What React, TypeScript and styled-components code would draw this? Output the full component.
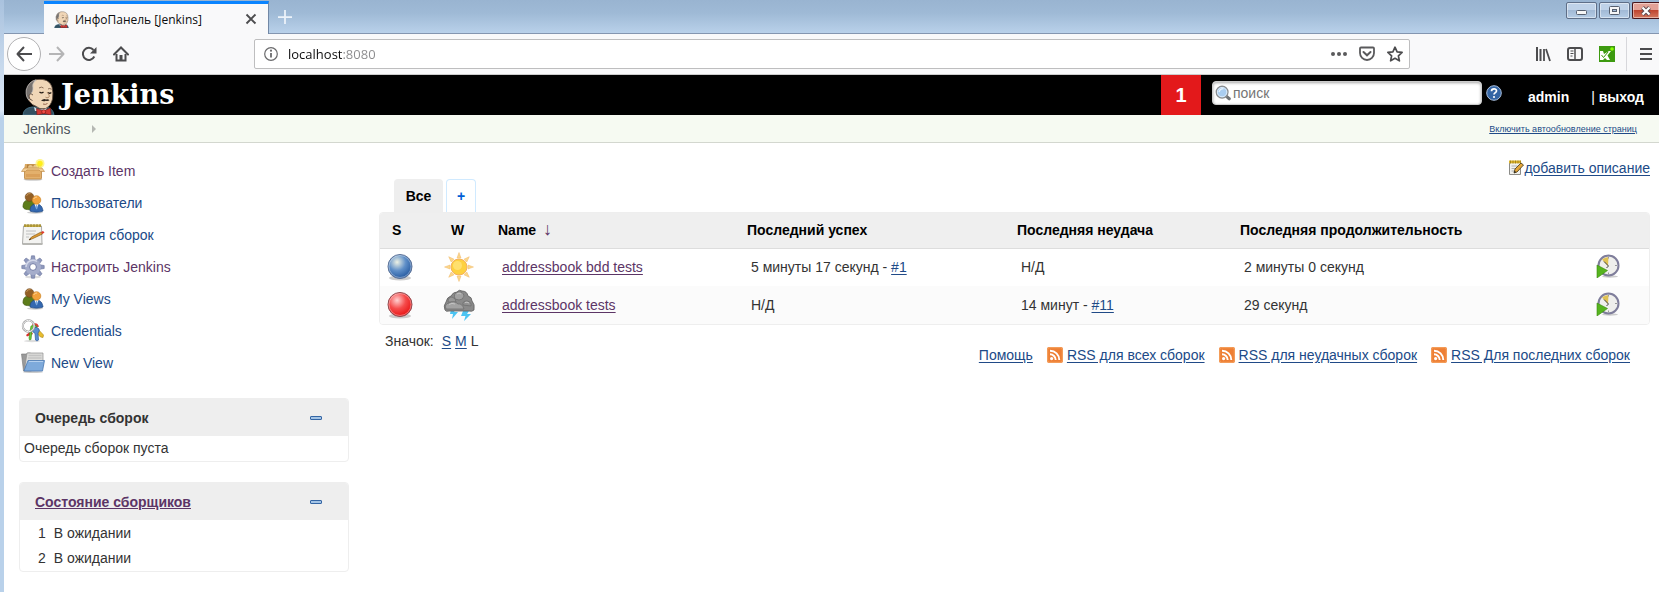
import React from "react";
import styled, { createGlobalStyle } from "styled-components";

const UI = `"Open Sans", "Noto Sans", sans-serif`;
const PAGE = `"Liberation Sans", Arial, sans-serif`;
const LINK = "#204a87";
const VISITED = "#5c3566";

const GlobalStyle = createGlobalStyle`
  * { box-sizing: border-box; }
  body { margin: 0; background: #fff; font-family: ${PAGE}; font-size: 14px; color: #333; }
  button { font: inherit; border: 0; padding: 0; background: none; cursor: pointer; }
  svg { display: block; flex: none; }
  h2 { margin: 0; font-size: 14px; }
`;

const Window = styled.div`
  min-height: 100vh;
  padding-left: 4px;
  background: linear-gradient(#a9c2de, #dce8f6 110px, #b9d1ea 118px);
`;

const Content = styled.div`
  min-height: 100vh;
  background: #fff;
`;

/* Browser chrome */

const TitleBar = styled.div`
  display: flex;
  align-items: flex-start;
  height: 34px;
  padding-left: 40px;
  background: linear-gradient(#99b4d1, #9fbad6 40%, #b9d1ea);
  border-bottom: 1px solid #8496b0;
`;

const BrowserTab = styled.div`
  display: flex;
  align-items: center;
  width: 225px;
  height: 33px;
  margin: 1px 0 -1px;
  padding: 0 11px 0 10px;
  background: #f9f9fa;
  border-top: 3px solid #0a84ff;
  border-right: 1px solid #7288a6;
  font-family: ${UI};
  font-size: 12px;
  color: #0c0c0d;
`;

const TabTitle = styled.span`
  flex: 1;
  margin-left: 6px;
  white-space: nowrap;
`;

const NewTab = styled.button`
  display: grid;
  place-items: center;
  width: 32px;
  height: 33px;
`;

const WindowButtons = styled.div`
  display: flex;
  gap: 2px;
  margin-left: auto;
  padding-top: 2px;
`;

const WindowButton = styled.button<{ $close?: boolean }>`
  display: grid;
  place-items: center;
  width: ${(p) => (p.$close ? 27 : 31)}px;
  height: 17px;
  border: 1px solid ${(p) => (p.$close ? "#47161c" : "#5f6f88")};
  border-right-width: ${(p) => (p.$close ? 0 : 1)}px;
  border-radius: ${(p) => (p.$close ? "2px 0 0 2px" : "2px")};
  box-shadow: inset 0 0 0 1px rgba(255, 255, 255, 0.45);
  background: ${(p) =>
    p.$close
      ? "linear-gradient(#e3a196 0 45%, #bf4530 50%, #d4785f)"
      : "linear-gradient(#bfd2e8 0 45%, #a2bad6 50%, #b6cde6)"};
`;

const Toolbar = styled.div`
  display: flex;
  align-items: center;
  height: 41px;
  padding: 0 1px 0 3px;
  background: #f9f9fa;
  border-bottom: 1px solid #ccc;
`;

const ToolButton = styled.button`
  display: grid;
  place-items: center;
  width: 32px;
  height: 32px;
`;

const BackButton = styled(ToolButton)`
  width: 34px;
  height: 34px;
  border: 1px solid #b1b1b3;
  border-radius: 50%;
  background: #fff;
`;

const MenuButton = styled(ToolButton)`
  width: 24px;
  margin-left: 7px;
`;

const Divider = styled.span`
  width: 1px;
  height: 34px;
  margin-left: 3px;
  background: #d7d7db;
`;

const UrlBar = styled.div`
  display: flex;
  flex: 1;
  align-items: center;
  height: 30px;
  margin: 0 117px;
  padding: 0 0 0 9px;
  background: #fff;
  border: 1px solid #bebebf;
  border-radius: 2px;
`;

const UrlInput = styled.input`
  flex: 1;
  min-width: 0;
  margin-left: 10px;
  padding: 0;
  border: 0;
  outline: 0;
  font-family: ${UI};
  font-size: 13px;
  line-height: 20px;
  color: #0c0c0d;
  background: linear-gradient(90deg, #0c0c0d 54px, #8a8a8c 54px);
  -webkit-background-clip: text;
  background-clip: text;
  -webkit-text-fill-color: transparent;
`;

const UrlAction = styled(ToolButton)`
  width: 28px;
`;

/* Jenkins header */

const Header = styled.header`
  display: flex;
  align-items: center;
  height: 40px;
  padding: 0 15px 0 18px;
  background: #000;
  color: #fff;
`;

const Logo = styled.a`
  display: flex;
  align-items: flex-end;
  gap: 6px;
  height: 40px;
  margin-right: auto;
  color: #fff;
  text-decoration: none;
`;

const LogoText = styled.span`
  align-self: center;
  font: bold 27px/32px "DejaVu Serif", serif;
`;

const Alerts = styled.button`
  width: 40px;
  height: 40px;
  background: #e3191b;
  color: #fff;
  font-size: 20px;
  font-weight: bold;
`;

const SearchForm = styled.form`
  display: flex;
  align-items: center;
  gap: 4px;
  margin-left: 11px;
  padding-bottom: 4px;
`;

const SearchBox = styled.label`
  display: flex;
  align-items: center;
  gap: 2px;
  width: 270px;
  height: 24px;
  padding-left: 2px;
  background: #fff;
  border: 1px solid #ccc;
  border-radius: 4px;
  box-shadow: inset 0 1px 3px rgba(0, 0, 0, 0.35);
`;

const SearchInput = styled.input`
  flex: 1;
  min-width: 0;
  padding: 0;
  border: 0;
  outline: 0;
  background: none;
  font: 14px/18px ${PAGE};
  &::placeholder { color: #757575; opacity: 1; }
`;

const Account = styled.div`
  display: flex;
  margin-left: 26px;
  padding-top: 4px;
  line-height: 18px;
`;

const AccountLink = styled.a`
  color: #fff;
  font-weight: bold;
  text-decoration: none;
`;

const LogOut = styled.span`
  margin-left: 22px;
`;

const Breadcrumbs = styled.nav`
  display: flex;
  align-items: center;
  height: 28px;
  padding: 0 22px 0 19px;
  background: #f6faf2;
  border-bottom: 1px solid #d3d7cf;
`;

const Crumb = styled.a`
  margin-right: 22px;
  color: #4d545d;
  text-decoration: none;
`;

const AutoRefresh = styled.a`
  margin-left: auto;
  font-size: 9px;
  color: ${LINK};
`;

/* Page body */

const Body = styled.div`
  display: flex;
  gap: 30px;
  padding: 0 9px 20px 15px;
`;

const Side = styled.aside`
  flex: none;
  width: 330px;
  padding-top: 12px;
`;

const Main = styled.main`
  flex: 1;
  min-width: 0;
  padding-top: 16px;
`;

const Task = styled.a<{ $visited?: boolean }>`
  display: flex;
  align-items: center;
  gap: 6px;
  height: 32px;
  padding-left: 2px;
  color: ${(p) => (p.$visited ? VISITED : LINK)};
  text-decoration: none;
`;

const Panes = styled.div`
  display: flex;
  flex-direction: column;
  gap: 20px;
  padding-top: 19px;
`;

const Pane = styled.section`
  border: 1px solid #eee;
  border-radius: 4px;
  overflow: hidden;
`;

const PaneHeader = styled.div`
  display: flex;
  align-items: center;
  justify-content: space-between;
  height: 37px;
  padding: 0 26px 0 15px;
  background: #eee;
`;

const PaneLink = styled.a`
  color: ${VISITED};
`;

const PaneText = styled.p`
  margin: 0;
  padding-left: 4px;
  line-height: 25px;
`;

const Executors = styled.ol`
  margin: 0;
  padding: 1px 0 0 18px;
  list-style: none;
  line-height: 25px;
`;

const Executor = styled.li`
  display: flex;
  gap: 8px;
`;

const Description = styled.div`
  display: flex;
  justify-content: flex-end;
  margin-bottom: 2px;
  line-height: 18px;
`;

const Link = styled.a<{ $visited?: boolean }>`
  color: ${(p) => (p.$visited ? VISITED : LINK)};
  text-decoration: underline;
  text-underline-offset: 2px;
`;

const DescriptionLink = styled(Link)`
  display: flex;
  align-items: center;
`;

const Tabs = styled.div`
  display: flex;
  gap: 3px;
  padding-left: 15px;
`;

const ViewTab = styled.a<{ $active?: boolean }>`
  display: grid;
  place-items: center;
  width: ${(p) => (p.$active ? 49 : 30)}px;
  height: 33px;
  border: 1px solid ${(p) => (p.$active ? "#eee" : "#d0eaff")};
  border-bottom: 0;
  border-radius: 4px 4px 0 0;
  background: ${(p) => (p.$active ? "#eee" : "#fff")};
  color: ${(p) => (p.$active ? "#000" : "#005fd6")};
  font-weight: bold;
  text-decoration: none;
`;

const TableFrame = styled.div`
  border: 1px solid #eee;
  border-radius: 4px;
  overflow: hidden;
`;

const Jobs = styled.table`
  width: 100%;
  table-layout: fixed;
  border-collapse: collapse;
`;

const Col = styled.col<{ $w?: number }>`
  width: ${(p) => (p.$w ? `${p.$w}px` : "auto")};
`;

const Th = styled.th`
  height: 35px;
  padding: 0 0 0 12px;
  background: #efefef;
  border-bottom: 1px solid #ddd;
  color: #000;
  text-align: left;
  white-space: nowrap;
`;

const Arrow = styled.span`
  margin-left: 3px;
  font-size: 18px;
  line-height: 14px;
  font-weight: normal;
  color: ${VISITED};
`;

const Row = styled.tr`
  background: #fff;
  &:nth-child(2n) { background: #fbfbfb; }
`;

const Td = styled.td<{ $icon?: boolean }>`
  height: 38px;
  padding: 0 0 0 ${(p) => (p.$icon ? 4 : 16)}px;
`;

const Footer = styled.div`
  display: flex;
  justify-content: space-between;
  padding: 7px 20px 0 6px;
  line-height: 18px;
`;

const IconSizes = styled.div`
  display: flex;
  gap: 4px;
`;

const SizeLabel = styled.span`
  margin-right: 4px;
`;

const Feeds = styled.div`
  display: flex;
  gap: 14px;
  padding-top: 14px;
`;

const Feed = styled.span`
  display: flex;
  align-items: center;
  gap: 4px;
`;

/* Drawings */

const Butler = ({ w, h }: { w: number; h: number }) => (
  <svg width={w} height={h} viewBox="0 0 33 37">
    <path d="M1 37q.5-7 9-8h14q7 1 8 8z" fill="#335061" stroke="#4c7a90" strokeWidth=".8" />
    <path d="M12 29q7 5 13 0l-1 4H13z" fill="#d9e2e8" />
    <path d="M8 24Q4 20 4.500 13 6 3 15 1.500 27 0 30 9q1.500 6 .5 12-1.500 7-7 9.500-6 1.500-10-2.500-3.500-1-5.500-4z" fill="#f0d6b7" stroke="#5a473b" strokeWidth=".8" />
    <path d="M8.500 16.500L7 22Q3.500 19 4.200 12 6 4 14 1.800 9.500 6 11 10q.5 3-2.500 6.500z" fill="#77726f" stroke="#c9c6c4" strokeWidth=".7" />
    <path d="M11 17q-3.500-2.500-4 1 0 4 3.500 4.500" fill="#f0d6b7" stroke="#5a473b" strokeWidth=".9" />
    <path d="M17 10q2.500-1.800 4.500 0M26 11q1.800-1.200 3.500.300" fill="none" stroke="#8a6d57" />
    <path d="M17.500 14q2 1.800 4 0M26 14.500q1.600 1.500 3.300 0" fill="none" stroke="#221a15" strokeWidth="1.200" />
    <path d="M25 14q3.500 4 1.500 5.500-1.700.8-3-.3" fill="none" stroke="#a67e5c" strokeWidth=".9" />
    <path d="M19 22.500q3-2.500 5-1 2.500-.8 3.500 1-2 .8-3.700.2-2.300 1.200-4.800-.2z" fill="#2e2520" />
    <path d="M21 26q2.500 1 4.500-.5" fill="none" stroke="#8c5a45" strokeWidth=".9" />
    <path d="M14.500 30.500l7 2.500 7-3 .5 7-7-1.500-7 1.500z" fill="#d33833" stroke="#7c1a16" strokeWidth=".6" />
    <circle cx="21.700" cy="33.700" r="2" fill="#f04b45" stroke="#7c1a16" strokeWidth=".7" />
  </svg>
);

const Info = () => (
  <svg width="14" height="14" viewBox="0 0 14 14">
    <circle cx="7" cy="7" r="6.300" fill="none" stroke="#6a6a6c" strokeWidth="1.200" />
    <path d="M7 6v4.500" stroke="#6a6a6c" strokeWidth="1.800" />
    <circle cx="7" cy="3.700" r="1.100" fill="#6a6a6c" />
  </svg>
);

const Stroke = ({ d, color = "#4c4c4e", w = 2, size = 16 }: { d: string; color?: string; w?: number; size?: number }) => (
  <svg width={size} height={size} viewBox="0 0 16 16" fill="none" stroke={color} strokeWidth={w} strokeLinejoin="round">
    <path d={d} />
  </svg>
);

const Reload = () => (
  <svg width="16" height="16" viewBox="0 0 16 16">
    <path d="M13.300 10.500A6 6 0 1 1 12.500 4" fill="none" stroke="#4c4c4e" strokeWidth="2" />
    <path d="M15.500 1v6.500H9z" fill="#4c4c4e" />
  </svg>
);

const Home = () => (
  <svg width="16" height="16" viewBox="0 0 16 16">
    <path d="M1 8.500L8 1.500l7 7" fill="none" stroke="#4c4c4e" strokeWidth="2" strokeLinecap="round" />
    <path d="M3.500 8v6.500h9V8" fill="none" stroke="#4c4c4e" strokeWidth="2" />
    <path d="M6.500 9h3v5.500h-3z" fill="#4c4c4e" />
  </svg>
);

const Dots = () => (
  <svg width="16" height="4" viewBox="0 0 16 4" fill="#5a5a5c">
    <circle cx="2" cy="2" r="2" /><circle cx="8" cy="2" r="2" /><circle cx="14" cy="2" r="2" />
  </svg>
);

const Pocket = () => (
  <svg width="16" height="16" viewBox="0 0 16 16" fill="none" stroke="#5a5a5c" strokeWidth="1.800">
    <path d="M1 2.500q0-1 1-1h12q1 0 1 1V7a7 7 0 0 1-14 0z" />
    <path d="M4.500 6L8 9.300 11.500 6" strokeWidth="2" strokeLinecap="round" />
  </svg>
);

const Library = () => (
  <svg width="16" height="16" viewBox="0 0 16 16" stroke="#4c4c4e" strokeWidth="2">
    <path d="M2 1v14M5.500 3v12" /><path d="M9 3v12M11 3l4 12" strokeWidth="1.800" />
  </svg>
);

const Sidebar = () => (
  <svg width="16" height="16" viewBox="0 0 16 16" fill="none" stroke="#4c4c4e">
    <rect x="1" y="2" width="14" height="12" rx="2" strokeWidth="2" />
    <path d="M8 2v12" strokeWidth="1.500" /><path d="M3.500 5h3M3.500 7.500h3M3.500 10h2" />
  </svg>
);

const Katalon = () => (
  <svg width="16" height="16" viewBox="0 0 16 16">
    <path fill="#3d9a10" d="M0 0h16v16H0z" />
    <path d="M1 5h3l1 3 5-3h2L8.500 9.500 11 14H8l-2-2-2 2H1z" fill="#fff" />
    <path d="M2.500 9l2 2.500L9 6" stroke="#3d9a10" fill="none" />
    <circle cx="13" cy="3" r="1.800" fill="#8f0" />
  </svg>
);

const Magnifier = () => (
  <svg width="16" height="16" viewBox="0 0 18 18">
    <path d="M12 12l4 3.500" stroke="#6f7376" strokeWidth="3.500" strokeLinecap="round" />
    <circle cx="8" cy="8" r="6.600" fill="#a9cdf0" stroke="#8a8d90" strokeWidth="1.500" />
    <circle cx="8" cy="8" r="5.300" fill="none" stroke="#dfeefa" strokeWidth="1" />
    <path d="M4.500 8q1-4 5-4" stroke="#e8f3fd" strokeWidth="1.500" fill="none" />
  </svg>
);

const Help = () => (
  <svg width="16" height="16" viewBox="0 0 16 16">
    <circle cx="8" cy="8" r="7.300" fill="#3465a4" stroke="#a9bedb" strokeWidth="1" />
    <path d="M5.500 6.300C5.500 3 10.700 3.200 10.500 6 10.400 7.700 8 7.600 8 9.600" fill="none" stroke="#fff" strokeWidth="1.700" />
    <circle cx="8" cy="12" r="1.100" fill="#fff" />
  </svg>
);

const Package = () => (
  <svg width="24" height="24" viewBox="0 0 24 24">
    <ellipse cx="12" cy="20.500" rx="9.500" ry="1.300" fill="#ccc" />
    <path d="M4 5h16l1 6H3z" fill="#d9a862" /><path d="M6 5.500h12v4H6z" fill="#b5813f" />
    <path d="M7 9q0-3 2.500-3T12 9zM12 9q0-3.500 2.500-3.500T17 9z" fill="#e6c48c" />
    <path d="M3.500 10h17v9q0 1-1 1h-15q-1 0-1-1z" fill="#e3b06c" stroke="#b98440" strokeWidth=".8" />
    <path d="M3 9h18l2.500 3.500h-4L18 11H6l-1.500 1.500h-4z" fill="#f3cd93" stroke="#b98440" strokeWidth=".6" />
    <path d="M5 15h14v3H5z" fill="#cf8f45" opacity=".45" />
    <circle cx="19" cy="4.500" r="4.500" fill="#fff36a" opacity=".75" /><circle cx="19" cy="4.500" r="2.700" fill="#ffee1c" />
  </svg>
);

const People = () => (
  <svg width="24" height="24" viewBox="0 0 24 24">
    <ellipse cx="14" cy="21.500" rx="8" ry="1.200" fill="#ccc" />
    <path d="M2 16c0-5 2-7 6-7s7 3 7 9c-4 1-10 1-12-.500z" fill="#5d7c1a" stroke="#41570d" strokeWidth=".7" />
    <circle cx="8.500" cy="6" r="4.300" fill="#936026" stroke="#6e4415" strokeWidth=".6" />
    <path d="M5.500 5q1-3 4-2.500" stroke="#c29155" fill="none" />
    <path d="M9 20c0-5 2.500-7 6.500-7s6 3 6.500 7c-3 1.500-10 1.500-13 0z" fill="#3468b0" stroke="#20477f" strokeWidth=".7" />
    <path d="M13.500 13h4l-2 5z" fill="#fff" /><path d="M15 14h1l.600 3-1 1.500-1-1.500z" fill="#79a7dd" />
    <circle cx="15.500" cy="9" r="4.300" fill="#f2a23c" stroke="#c67814" strokeWidth=".6" />
    <path d="M12.700 8q1-2.500 3.500-2" stroke="#ffd596" fill="none" />
  </svg>
);

const Notepad = () => (
  <svg width="24" height="24" viewBox="0 0 24 24">
    <path d="M2.500 3h18l.5 18H1.500z" fill="#f3f3f1" stroke="#a3a3a0" strokeWidth=".9" />
    <path d="M1.500 20h20v2h-20z" fill="#b7b7b3" />
    <path d="M3 1.500h17v2.500H3z" fill="#c5ad45" /><path d="M4 1v3M7 1v3M10 1v3M13 1v3M16 1v3M19 1v3" stroke="#857226" strokeWidth=".8" />
    <path d="M5 8h10M5 11h9M5 14h3" stroke="#c0c0c0" />
    <path d="M8 17l2.500-3L20 9l1.500 2L12 15.500z" fill="#dd9a33" stroke="#7c5013" strokeWidth=".6" />
    <path d="M20 9l2-1 1.500 1.500-2 1.500z" fill="#e03a2d" /><path d="M8 17l1.200-1.700.8 1z" fill="#222" />
  </svg>
);

const EditNote = () => (
  <svg width="16" height="16" viewBox="0 0 16 16">
    <path d="M1.500 2h11v12.500h-11z" fill="#f1f1ee" stroke="#8c8c88" />
    <path d="M1 .5h12v2.800H1z" fill="#dfb52c" /><path d="M2.500.5v3M5 .5v3M7.500.5v3M10 .5v3M12.300.5v3" stroke="#8a6d12" strokeWidth=".7" />
    <path d="M3.500 6h6M3.500 8.500h4M3.500 11h3" stroke="#b0b0b0" />
    <path d="M6 13l1-4 6-6 2.500 2-6.500 7z" fill="#e5a63a" stroke="#55461f" strokeWidth=".9" />
    <path d="M6 13l.6-2.200 1.500 1.200z" fill="#222" />
  </svg>
);

const Gear = () => (
  <svg width="24" height="24" viewBox="0 0 24 24">
    <ellipse cx="12" cy="22" rx="8" ry="1.300" fill="#ddd" />
    <g fill="#8f99bd" stroke="#68729c" strokeWidth=".6">
      {[0, 45, 90, 135, 180, 225, 270, 315].map((a) => (
        <path key={a} d="M9.700 6L10.500 .8h3L14.300 6z" transform={`rotate(${a} 12 12)`} />
      ))}
    </g>
    <circle cx="12" cy="12" r="8" fill="#a5adcb" />
    <path d="M5 12a7 7 0 0 1 11-5.500" stroke="#d1d6e8" strokeWidth="1.500" fill="none" />
    <circle cx="12" cy="12" r="3.400" fill="#fff" stroke="#707aa5" />
  </svg>
);

const Keys = () => (
  <svg width="24" height="24" viewBox="0 0 24 24">
    <ellipse cx="11" cy="22" rx="8" ry="1.200" fill="#ddd" />
    <path d="M15 8l7.500 8-.5 2.500-2.500-.5-6-6z" fill="#e8bd2e" stroke="#a98412" strokeWidth=".6" />
    <path d="M11 5.500q5-3.500 7 2l-4 2z" fill="#d9413a" /><path d="M10 12l-5 4 1 1.500 6-2.500z" fill="#d9302b" />
    <path d="M10 7q5-2 6 1l-5 4-1 8.500L8.500 21 8 19l1-7z" fill="#6cc93a" stroke="#3c8c17" strokeWidth=".6" />
    <path d="M12 9q4-2 6 1 1 2-1 4l.5 7-1.500 1-1.500-1-.5-6.500q-4-2-2-5.500z" fill="#5a8fd0" stroke="#2c5c9c" strokeWidth=".7" />
    <circle cx="7.500" cy="7" r="5.700" fill="none" stroke="#999" strokeWidth="2" />
    <circle cx="7.500" cy="7" r="5.700" fill="none" stroke="#f2f2f2" strokeWidth="1" />
  </svg>
);

const Folder = () => (
  <svg width="24" height="24" viewBox="0 0 24 24">
    <ellipse cx="12" cy="21" rx="10" ry="1" fill="#ccc" />
    <path d="M.5 3h5l1-1h3l1 18H2.500z" fill="#9a9a9a" stroke="#777" strokeWidth=".6" />
    <path d="M6 2h16v13H4z" fill="#dcdcda" stroke="#8e8e8c" strokeWidth=".7" />
    <path d="M7.500 4.500h13M7 7h13.500" stroke="#c3c3c3" strokeWidth="1.500" />
    <path d="M7 9.500h16.500L21.500 20H3z" fill="#7eaadb" stroke="#4b7ab3" strokeWidth=".8" />
    <path d="M8 10.500h14" stroke="#b5d0ee" />
  </svg>
);

const Ball = ({ id, light, base, dark, rim }: { id: string; light: string; base: string; dark: string; rim: string }) => (
  <svg width="32" height="32" viewBox="0 0 32 32">
    <defs>
      <radialGradient id={id} cx=".38" cy=".32" r=".65">
        <stop offset="0" stopColor={light} /><stop offset=".55" stopColor={base} /><stop offset="1" stopColor={dark} />
      </radialGradient>
    </defs>
    <ellipse cx="16" cy="27" rx="11" ry="2.500" fill="#ccc" />
    <circle cx="16" cy="15.500" r="12" fill={`url(#${id})`} stroke={rim} />
    <circle cx="16" cy="15.500" r="11" fill="none" stroke="#fff" opacity=".35" />
  </svg>
);

const BlueBall = () => <Ball id="ballBlue" light="#eef2e4" base="#5f8fc8" dark="#2c60a5" rim="#5c7196" />;
const RedBall = () => <Ball id="ballRed" light="#ffd0d0" base="#f54b4b" dark="#ea1c1c" rim="#8c4a50" />;

const Sun = () => (
  <svg width="32" height="32" viewBox="0 0 32 32">
    <g fill="#fbd78c" stroke="#f0b96a" strokeWidth=".5">
      {[0, 45, 90, 135, 180, 225, 270, 315].map((a) => (
        <path key={a} d="M14 7L16 1.500 18 7z" transform={`rotate(${a} 16 16)`} />
      ))}
    </g>
    <circle cx="16" cy="16" r="8" fill="#fdd13f" stroke="#f5b05a" />
    <circle cx="14.500" cy="14.500" r="4.500" fill="#ffe37a" opacity=".8" />
  </svg>
);

const Storm = () => (
  <svg width="32" height="32" viewBox="0 0 32 32">
    <path d="M8 20h5l-2 3h4l-6 7 1-5H7zM20 22h6l-2 3h4l-7 7 1.500-5H18z" fill="#4cc4f2" />
    <path d="M2 21q-2-4 1-8 1-5 5-6 2-4 6-4 2-3 5-1 5 0 6 5 4 1 4 5 3 3 2 9-2 2-5 1H6q-3 1-4-1z" fill="#8a8a8a" stroke="#606060" strokeWidth=".8" />
    <g fill="#a2a2a2" stroke="#6a6a6a" strokeWidth=".7">
      <path d="M12 10q-2-6 3-7 5-1 6 4-1 4-5 4z" />
      <path d="M5 13q0-5 4-5 4 1 4 5z" fill="#989898" />
      <path d="M3 20q-2-5 3-6 5-3 9 1 4-1 6 5z" />
      <path d="M20 16q-1-4 4-4 5 1 4 5z" fill="#929292" />
    </g>
    <path d="M14 5q2-2 4 0M6 15.500q3-2 6-.5M22 13.500q2-1 4 .5" stroke="#c4c4c4" fill="none" />
  </svg>
);

const ClockRun = () => (
  <svg width="24" height="24" viewBox="0 0 24 24">
    <ellipse cx="14" cy="22.500" rx="8" ry="1.200" fill="#ccc" />
    <circle cx="12.500" cy="11.500" r="10" fill="#efefec" stroke="#7f7e9b" strokeWidth="2" />
    <path d="M12 12L6 5.500Q9 3 12.500 3z" fill="#e0c254" />
    <path d="M8 7.500l4.500 4.500-2 2" fill="none" stroke="#444" />
    <path d="M12.500 2.500v2M21 11.500h-2M12.500 20.500v-2" stroke="#999" />
    <path d="M1 11l10.500 5.500L1 24z" fill="#56b41e" stroke="#3b8a0f" strokeWidth=".6" />
  </svg>
);

const Rss = () => (
  <svg width="16" height="16" viewBox="0 0 16 16">
    <rect width="16" height="16" rx="2" fill="#ee7f34" />
    <rect x=".7" y=".7" width="14.600" height="14.600" rx="1.500" fill="none" stroke="#f5a463" />
    <circle cx="4.600" cy="11.600" r="1.600" fill="#fff" />
    <path d="M3 7.300a5.700 5.700 0 0 1 5.700 5.700M3 3.700a9.300 9.300 0 0 1 9.300 9.300" fill="none" stroke="#fff" strokeWidth="1.900" />
  </svg>
);

const Collapse = () => (
  <svg width="12" height="4" viewBox="0 0 12 4">
    <rect x=".5" y=".5" width="11" height="3" rx=".5" fill="#a3c4e6" stroke="#3465a4" />
  </svg>
);

/* Content */

const tasks = [
  { label: "Создать Item", icon: <Package />, visited: true },
  { label: "Пользователи", icon: <People /> },
  { label: "История сборок", icon: <Notepad /> },
  { label: "Настроить Jenkins", icon: <Gear />, visited: true },
  { label: "My Views", icon: <People /> },
  { label: "Credentials", icon: <Keys /> },
  { label: "New View", icon: <Folder /> },
];

const jobs = [
  { name: "addressbook bdd tests", status: <BlueBall />, weather: <Sun />, success: "5 минуты 17 секунд", successRun: "#1", failure: "Н/Д", duration: "2 минуты 0 секунд" },
  { name: "addressbook tests", status: <RedBall />, weather: <Storm />, success: "Н/Д", failure: "14 минут", failureRun: "#11", duration: "29 секунд" },
];

const feeds = ["RSS для всех сборок", "RSS для неудачных сборок", "RSS Для последних сборок"];

const Build = ({ when, run }: { when: string; run?: string }) => (
  <>
    {when}
    {run && <> - <Link href="#">{run}</Link></>}
  </>
);

export default function App() {
  return (
    <Window>
      <GlobalStyle />
      <Content>
        <TitleBar>
          <BrowserTab>
            <Butler w={15} h={17} />
            <TabTitle>ИнфоПанель [Jenkins]</TabTitle>
            <button aria-label="Закрыть вкладку"><Stroke d="M2 2l12 12M14 2L2 14" size={12} w={2.5} /></button>
          </BrowserTab>
          <NewTab aria-label="Новая вкладка"><Stroke d="M8 0v16M0 8h16" color="#edf3fa" size={14} /></NewTab>
          <WindowButtons>
            <WindowButton aria-label="Свернуть">
              <svg width="11" height="9" viewBox="0 0 11 9"><rect x=".5" y="4.500" width="10" height="4" rx="1" fill="#f6f6f6" stroke="#565f6e" /></svg>
            </WindowButton>
            <WindowButton aria-label="Развернуть">
              <svg width="11" height="9" viewBox="0 0 11 9"><rect x=".5" y=".5" width="10" height="8" rx="1" fill="#f6f6f6" stroke="#565f6e" /><rect x="3.500" y="3.500" width="4" height="2" fill="#a2bad6" stroke="#565f6e" /></svg>
            </WindowButton>
            <WindowButton $close aria-label="Закрыть">
              <svg width="12" height="10" viewBox="0 0 12 10"><path d="M2.500 1.500l7 7M9.500 1.500l-7 7" stroke="#5b4a50" strokeWidth="4" /><path d="M2.500 1.500l7 7M9.500 1.500l-7 7" stroke="#fff" strokeWidth="2.200" /></svg>
            </WindowButton>
          </WindowButtons>
        </TitleBar>

        <Toolbar>
          <BackButton aria-label="Назад"><Stroke d="M16 8H1.500M8 1L1.500 8 8 15" /></BackButton>
          <ToolButton aria-label="Вперёд"><Stroke d="M0 8h14.500M8 1l6.500 7L8 15" color="#b5b5b6" /></ToolButton>
          <ToolButton aria-label="Обновить"><Reload /></ToolButton>
          <ToolButton aria-label="Домой"><Home /></ToolButton>
          <UrlBar>
            <Info />
            <UrlInput aria-label="Адрес" defaultValue="localhost:8080" />
            <UrlAction aria-label="Действия"><Dots /></UrlAction>
            <UrlAction aria-label="Pocket"><Pocket /></UrlAction>
            <UrlAction aria-label="Закладка"><Stroke d="M8 1.200l2.100 4.600 5 .600-3.700 3.400 1 5L8 12.300l-4.400 2.500 1-5L.9 6.400l5-.600z" w={1.7} /></UrlAction>
          </UrlBar>
          <ToolButton aria-label="Библиотека"><Library /></ToolButton>
          <ToolButton aria-label="Боковая панель"><Sidebar /></ToolButton>
          <ToolButton aria-label="Katalon"><Katalon /></ToolButton>
          <Divider />
          <MenuButton aria-label="Меню"><Stroke d="M2 3h12M2 8h12M2 13h12" /></MenuButton>
        </Toolbar>

        <Header>
          <Logo href="#">
            <Butler w={33} h={37} />
            <LogoText>Jenkins</LogoText>
          </Logo>
          <Alerts>1</Alerts>
          <SearchForm>
            <SearchBox>
              <Magnifier />
              <SearchInput placeholder="поиск" aria-label="поиск" />
            </SearchBox>
            <Help />
          </SearchForm>
          <Account>
            <AccountLink href="#">admin</AccountLink>
            <LogOut>| <AccountLink href="#">выход</AccountLink></LogOut>
          </Account>
        </Header>

        <Breadcrumbs>
          <Crumb href="#">Jenkins</Crumb>
          <svg width="4" height="8" viewBox="0 0 4 8"><path d="M0 0l4 4-4 4z" fill="#b5b8b3" /></svg>
          <AutoRefresh href="#">Включить автообновление страниц</AutoRefresh>
        </Breadcrumbs>

        <Body>
          <Side>
            <nav>
              {tasks.map((t) => (
                <Task key={t.label} href="#" $visited={t.visited}>{t.icon}{t.label}</Task>
              ))}
            </nav>
            <Panes>
              <Pane>
                <PaneHeader>
                  <h2>Очередь сборок</h2>
                  <button aria-label="Свернуть очередь"><Collapse /></button>
                </PaneHeader>
                <PaneText>Очередь сборок пуста</PaneText>
              </Pane>
              <Pane>
                <PaneHeader>
                  <h2><PaneLink href="#">Состояние сборщиков</PaneLink></h2>
                  <button aria-label="Свернуть сборщиков"><Collapse /></button>
                </PaneHeader>
                <Executors>
                  <Executor><span>1</span>В ожидании</Executor>
                  <Executor><span>2</span>В ожидании</Executor>
                </Executors>
              </Pane>
            </Panes>
          </Side>

          <Main>
            <Description>
              <DescriptionLink href="#"><EditNote />добавить описание</DescriptionLink>
            </Description>
            <Tabs>
              <ViewTab href="#" $active>Все</ViewTab>
              <ViewTab href="#">+</ViewTab>
            </Tabs>
            <TableFrame>
              <Jobs>
                <colgroup>
                  <Col $w={59} /><Col $w={47} /><Col $w={249} /><Col $w={270} /><Col $w={223} /><Col /><Col $w={57} />
                </colgroup>
                <thead>
                  <tr>
                    <Th>S</Th><Th>W</Th><Th>Name <Arrow>↓</Arrow></Th>
                    <Th>Последний успех</Th><Th>Последняя неудача</Th><Th>Последняя продолжительность</Th><Th />
                  </tr>
                </thead>
                <tbody>
                  {jobs.map((j) => (
                    <Row key={j.name}>
                      <Td $icon>{j.status}</Td>
                      <Td $icon>{j.weather}</Td>
                      <Td><Link href="#" $visited>{j.name}</Link></Td>
                      <Td><Build when={j.success} run={j.successRun} /></Td>
                      <Td><Build when={j.failure} run={j.failureRun} /></Td>
                      <Td>{j.duration}</Td>
                      <Td $icon><button aria-label={`Запустить ${j.name}`}><ClockRun /></button></Td>
                    </Row>
                  ))}
                </tbody>
              </Jobs>
            </TableFrame>
            <Footer>
              <IconSizes>
                <SizeLabel>Значок:</SizeLabel>
                <Link href="#">S</Link><Link href="#">M</Link><span>L</span>
              </IconSizes>
              <Feeds>
                <Link href="#">Помощь</Link>
                {feeds.map((f) => (
                  <Feed key={f}><Rss /><Link href="#">{f}</Link></Feed>
                ))}
              </Feeds>
            </Footer>
          </Main>
        </Body>
      </Content>
    </Window>
  );
}
